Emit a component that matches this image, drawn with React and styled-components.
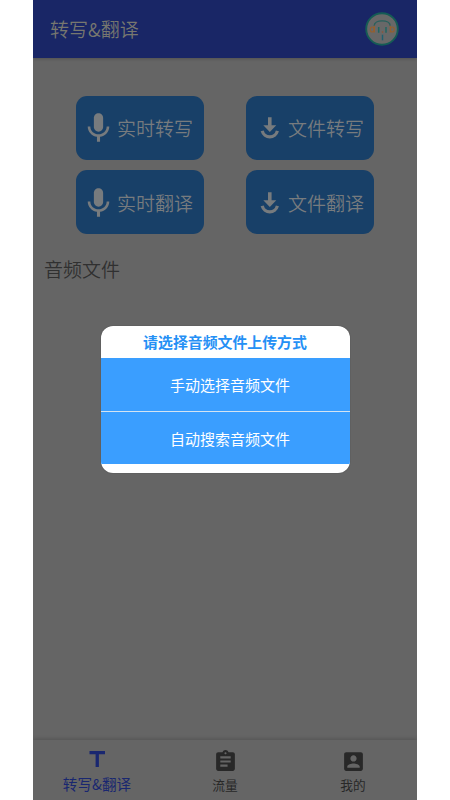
import styled, { createGlobalStyle } from "styled-components";

const GlobalStyle = createGlobalStyle`
  body {
    margin: 0;
    background: #ffffff;
    font-family: "Noto Sans CJK SC", sans-serif;
  }
`;

function MicIcon() {
  return (
    <svg width="37" height="37" viewBox="0 0 24 24" fill="currentColor">
      <path d="M12 14.700c1.660 0 3-1.340 3-3V5.700c0-1.660-1.340-3-3-3s-3 1.340-3 3v6c0 1.660 1.340 3 3 3z" />
      <path d="M17.300 11.300c0 3-2.540 5.100-5.300 5.100s-5.300-2.100-5.300-5.100H5c0 3.410 2.720 6.230 6 6.720v3.280h2v-3.280c3.280-.48 6-3.300 6-6.720z" />
    </svg>
  );
}

function DownloadIcon() {
  return (
    <svg width="37" height="37" viewBox="0 0 37 37" fill="none">
      <path d="M17 8.200h3.600v8.100h4.700l-6.500 6.600-6.500-6.600H17z" fill="currentColor" />
      <path d="M11.200 21.900a7.850 7.850 0 0 0 15.200 0" stroke="currentColor" strokeWidth="3.200" />
    </svg>
  );
}

function Avatar() {
  return (
    <svg width="34" height="34" viewBox="0 0 34 34" fill="none">
      <circle cx="17" cy="17" r="15.800" fill="#686868" stroke="#155c55" strokeWidth="1.900" />
      <path d="M9.200 13.800c0-6.600 16-6.600 16 0" stroke="#28605c" strokeWidth="1.400" />
      <g stroke="#94602f" strokeWidth="1.200">
        <ellipse cx="7.200" cy="17.500" rx="1.900" ry="2.500" />
        <path d="M9.400 13.700v6.700M25.300 13.700v6.700" />
        <ellipse cx="27.400" cy="17.500" rx="1.900" ry="2.500" />
      </g>
      <path d="M13.700 15v5.700M21 15v5.700" stroke="#216660" strokeWidth="1.500" />
      <path d="M17.500 22.700v5.600" stroke="#216070" strokeWidth="1.500" />
      <circle cx="17.500" cy="20" r="0.800" fill="#94502f" />
    </svg>
  );
}

function LetterIcon() {
  return (
    <svg width="25" height="25" viewBox="0 0 25 25" fill="currentColor">
      <path d="M4.500 5H20v3.200h-6.100V21h-3.300V8.200H4.500z" />
    </svg>
  );
}

function ClipboardIcon() {
  return (
    <svg width="25" height="25" viewBox="0 0 24 24" fill="currentColor">
      <path d="M19 3h-4.180C14.400 1.840 13.300 1 12 1c-1.300 0-2.400.84-2.820 2H5c-1.100 0-2 .9-2 2v14c0 1.100.9 2 2 2h14c1.100 0 2-.9 2-2V5c0-1.100-.9-2-2-2zm-7 0c.55 0 1 .45 1 1s-.45 1-1 1-1-.45-1-1 .45-1 1-1zm2 14H7v-2h7v2zm3-4H7v-2h10v2zm0-4H7V7h10v2z" />
    </svg>
  );
}

function UserIcon() {
  return (
    <svg width="25" height="25" viewBox="0 0 24 24" fill="currentColor">
      <path d="M3 5v14c0 1.100.89 2 2 2h14c1.100 0 2-.9 2-2V5c0-1.100-.9-2-2-2H5c-1.110 0-2 .9-2 2zm12 4c0 1.660-1.340 3-3 3s-3-1.340-3-3 1.340-3 3-3 3 1.340 3 3zm-9 8c0-2 4-3.100 6-3.100s6 1.100 6 3.100v1H6v-1z" />
    </svg>
  );
}

const actions = [
  { label: "实时转写", icon: <MicIcon /> },
  { label: "文件转写", icon: <DownloadIcon /> },
  { label: "实时翻译", icon: <MicIcon /> },
  { label: "文件翻译", icon: <DownloadIcon /> },
];

function App() {
  return (
    <>
      <GlobalStyle />
      <Phone>
        <Header>
          <Title>转写&amp;翻译</Title>
          <Avatar />
        </Header>
        <Main>
          <Actions>
            {actions.map((item) => (
              <ActionButton key={item.label}>
                {item.icon}
                <span>{item.label}</span>
              </ActionButton>
            ))}
          </Actions>
          <Heading>音频文件</Heading>
        </Main>
        <Nav>
          <Tab $active>
            <LetterIcon />
            <TabLabel $active>转写&amp;翻译</TabLabel>
          </Tab>
          <Tab>
            <ClipboardIcon />
            <TabLabel>流量</TabLabel>
          </Tab>
          <Tab>
            <UserIcon />
            <TabLabel>我的</TabLabel>
          </Tab>
        </Nav>
        <Overlay>
          <Dialog>
            <DialogTitle>请选择音频文件上传方式</DialogTitle>
            <Options>
              <Option>手动选择音频文件</Option>
              <Option>自动搜索音频文件</Option>
            </Options>
          </Dialog>
        </Overlay>
      </Phone>
    </>
  );
}

export default App;

const Phone = styled.div`
  position: relative;
  display: flex;
  flex-direction: column;
  width: 384px;
  height: 800px;
  margin: 0 auto;
  background: #656565;
  overflow: hidden;
`;

const Header = styled.header`
  display: flex;
  align-items: center;
  justify-content: space-between;
  box-sizing: border-box;
  height: 58px;
  padding: 0 18px 0 17px;
  background: #192666;
  box-shadow: 0 1px 3px rgba(0, 0, 0, 0.2);
`;

const Title = styled.h1`
  margin: 0;
  font-size: 19px;
  font-weight: 350;
  line-height: 28px;
  color: #77776f;
`;

const Main = styled.main`
  flex: 1;
  padding: 37.6px 0 0;
`;

const Actions = styled.div`
  display: grid;
  grid-template-columns: 128px 128px;
  gap: 10px 42.8px;
  justify-content: center;
  padding-right: 0.2px;
`;

const ActionButton = styled.button`
  display: flex;
  align-items: center;
  height: 64.4px;
  padding: 0 0 0 4.6px;
  border: 0;
  border-radius: 11px;
  background: #184068;
  color: #777b7e;
  font-family: inherit;
  font-size: 19px;
  font-weight: 350;
`;

const Heading = styled.h2`
  margin: 20.5px 0 0 11px;
  font-size: 19px;
  font-weight: 350;
  line-height: 28px;
  color: #303030;
`;

const Nav = styled.nav`
  display: grid;
  grid-template-columns: repeat(3, 1fr);
  height: 60px;
  background: #656565;
  box-shadow: 0 -1px 4px rgba(0, 0, 0, 0.18);
`;

const Tab = styled.div`
  display: flex;
  flex-direction: column;
  align-items: center;
  padding-top: ${(props) => (props.$active ? "6px" : "8.5px")};
  color: ${(props) => (props.$active ? "#192770" : "#282828")};
`;

const TabLabel = styled.span`
  font-size: ${(props) => (props.$active ? "14.6px" : "12.7px")};
  line-height: ${(props) => (props.$active ? "26px" : "22px")};
`;

const Overlay = styled.div`
  position: absolute;
  inset: 0;
  display: flex;
  align-items: center;
  justify-content: center;
  padding-bottom: 1.4px;
`;

const Dialog = styled.section`
  width: 249px;
  padding-bottom: 8.5px;
  border-radius: 12px;
  background: #ffffff;
  box-shadow: 0 0 1px #333333;
  overflow: hidden;
`;

const DialogTitle = styled.h3`
  margin: 0;
  font-size: 14.9px;
  font-weight: 700;
  line-height: 32px;
  text-align: center;
  color: #2590f5;
`;

const Options = styled.div`
  display: grid;
  gap: 1px;
  background: #d4e4f2;
`;

const Option = styled.div`
  height: 52.5px;
  padding-left: 10px;
  background: #3a9eff;
  color: #ffffff;
  font-size: 15px;
  line-height: 53px;
  text-align: center;
`;
